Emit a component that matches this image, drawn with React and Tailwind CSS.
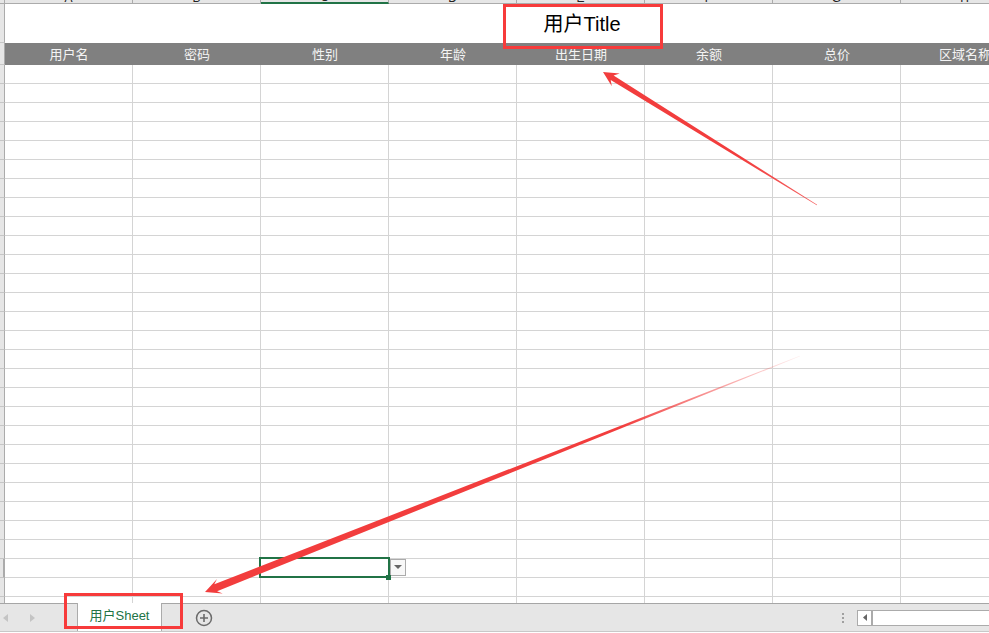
const COLS = ["用户名", "密码", "性别", "年龄", "出生日期", "余额", "总价", "区域名称"];
const LETTERS = ["A", "B", "C", "D", "E", "F", "G", "H"];
const DATA_ROWS = 29;
const SEL_ROW = 26;
const SEL_COL = 2;

function arrowPoints(tail, tip, head, wing, w0, w1) {
  const dx = tip[0] - tail[0];
  const dy = tip[1] - tail[1];
  const len = Math.hypot(dx, dy);
  const ux = dx / len;
  const uy = dy / len;
  const nx = -uy;
  const ny = ux;
  const base = [tip[0] - ux * head, tip[1] - uy * head];
  const inner = [tip[0] - ux * head * 0.72, tip[1] - uy * head * 0.72];
  const pts = [
    [tail[0] + nx * w0, tail[1] + ny * w0],
    [inner[0] + nx * w1, inner[1] + ny * w1],
    [base[0] + nx * wing, base[1] + ny * wing],
    tip,
    [base[0] - nx * wing, base[1] - ny * wing],
    [inner[0] - nx * w1, inner[1] - ny * w1],
    [tail[0] - nx * w0, tail[1] - ny * w0],
  ];
  return pts.map((p) => p[0].toFixed(1) + "," + p[1].toFixed(1)).join(" ");
}

function RowHead({ className = "" }) {
  return <div className={"w-[5px] shrink-0 bg-[#e6e6e6] border-r border-r-[#ababab] " + className} />;
}

function Annotations() {
  return (
    <svg className="absolute inset-0 pointer-events-none" width="989" height="633" viewBox="0 0 989 633">
      <defs>
        <linearGradient id="g1" gradientUnits="userSpaceOnUse" x1="817" y1="205" x2="740" y2="157">
          <stop offset="0" stopColor="#f23d3d" stopOpacity="0.8" />
          <stop offset="1" stopColor="#f23d3d" stopOpacity="1" />
        </linearGradient>
        <linearGradient id="g2" gradientUnits="userSpaceOnUse" x1="800" y1="356" x2="620" y2="428">
          <stop offset="0" stopColor="#f23d3d" stopOpacity="0.08" />
          <stop offset="1" stopColor="#f23d3d" stopOpacity="1" />
        </linearGradient>
      </defs>
      <rect x="504.5" y="5.5" width="157" height="42" fill="none" stroke="#f73b3b" strokeWidth="3" />
      <rect x="65.5" y="594.5" width="116" height="33" fill="none" stroke="#f73b3b" strokeWidth="3" />
      <polygon points={arrowPoints([817, 205], [603, 72], 15, 7.5, 0.4, 2.7)} fill="url(#g1)" />
      <polygon points={arrowPoints([800, 356], [205, 592], 16, 7.8, 0.3, 3.7)} fill="url(#g2)" />
    </svg>
  );
}

export default function App() {
  return (
    <div className="relative w-[989px] h-[633px] overflow-hidden bg-white flex flex-col font-['Liberation_Sans','Noto_Sans_CJK_SC',sans-serif]">
      <div className="h-[603px] shrink-0 overflow-hidden">
        {/* column letters, mostly scrolled away */}
        <div className="flex h-[4px]">
          <div className="w-[5px] shrink-0 bg-[#e6e6e6] border-r border-b border-[#ababab]" />
          {LETTERS.map((l, i) => (
            <div
              key={l}
              className={
                "w-[128px] shrink-0 bg-[#e6e6e6] border-r border-r-[#ababab] flex justify-center items-end overflow-hidden " +
                (i === SEL_COL ? "border-b-2 border-b-[#217346] bg-[#d2d2d2]" : "border-b border-b-[#ababab]")
              }
            >
              <span className="text-[12px] leading-none translate-y-[1px] text-[#222]">{l}</span>
            </div>
          ))}
        </div>

        {/* title row */}
        <div className="flex h-[39px]">
          <RowHead className="border-b border-b-[#c6c6c6]" />
          {COLS.map((c, i) => (
            <div key={c} className="w-[128px] shrink-0 flex items-center justify-center">
              {i === 4 && <span className="whitespace-nowrap text-[20px] text-black pl-[2px] pt-[1px]">用户Title</span>}
            </div>
          ))}
        </div>

        {/* header row */}
        <div className="flex h-[22px]">
          <RowHead className="border-b border-b-[#c6c6c6]" />
          {COLS.map((c) => (
            <div
              key={c}
              className="w-[128px] shrink-0 bg-[#808080] flex items-center justify-center text-[13px] text-[#f4f4f4] whitespace-nowrap font-['Noto_Sans_CJK_SC',sans-serif]"
            >
              {c}
            </div>
          ))}
        </div>

        {Array.from({ length: DATA_ROWS }).map((_, r) => (
          <div key={r} className="flex h-[19px]">
            <RowHead
              className={
                "border-b border-b-[#c6c6c6] " + (r === SEL_ROW ? "border-r-2 border-r-[#217346] bg-[#d2d2d2]" : "")
              }
            />
            {COLS.map((c, i) => (
              <div key={c} className="relative w-[128px] shrink-0 border-r border-b border-[#d4d4d4]">
                {r === SEL_ROW && i === SEL_COL && (
                  <>
                    <div className="absolute -left-[2px] -top-[2px] w-[131px] h-[21px] border-2 border-[#217346]" />
                    <div className="absolute left-[129px] top-0 w-[16px] h-[17px] bg-[#f8f8f8] border border-[#ababab] flex items-center justify-center">
                      <svg width="8" height="5" viewBox="0 0 8 5">
                        <polygon points="0,0 8,0 4,4" fill="#666" />
                      </svg>
                    </div>
                    <div className="absolute z-10 left-[125px] top-[16px] w-[5px] h-[5px] bg-[#217346]" />
                  </>
                )}
              </div>
            ))}
          </div>
        ))}
      </div>

      {/* sheet tab bar */}
      <div className="h-[29px] shrink-0 flex items-stretch bg-[#e6e6e6] border-t border-t-[#a6a6a6] border-b border-b-[#c8c8c8]">
        <div className="w-[77px] shrink-0 flex items-center pl-[3px] gap-[22px]">
          <svg width="5" height="8" viewBox="0 0 5 8">
            <polygon points="5,0 5,8 0,4" fill="#c4c4c4" />
          </svg>
          <svg width="5" height="8" viewBox="0 0 5 8">
            <polygon points="0,0 0,8 5,4" fill="#c4c4c4" />
          </svg>
        </div>
        <div className="w-[85px] shrink-0 -mt-px bg-white border-x border-[#ababab] flex items-center justify-center text-[13px] text-[#217346] pb-[2px]">
          用户Sheet
        </div>
        <div className="ml-[33px] flex items-center">
          <svg width="18" height="18" viewBox="0 0 18 18">
            <circle cx="9" cy="9" r="7.5" fill="none" stroke="#6b6b6b" strokeWidth="1.5" />
            <path d="M9 5v8M5 9h8" stroke="#6b6b6b" strokeWidth="1.6" />
          </svg>
        </div>
        <div className="flex-1" />
        <div className="w-[3px] flex flex-col items-center justify-center gap-[2px] mr-[13px]">
          <div className="w-[2px] h-[2px] bg-[#a0a0a0]" />
          <div className="w-[2px] h-[2px] bg-[#a0a0a0]" />
          <div className="w-[2px] h-[2px] bg-[#a0a0a0]" />
        </div>
        <div className="w-[132px] shrink-0 flex items-center">
          <div className="w-[16px] h-[16px] bg-white border border-[#ababab] border-r-2 flex items-center justify-center">
            <svg width="4" height="7" viewBox="0 0 4 7">
              <polygon points="4,0 4,7 0,3.5" fill="#666" />
            </svg>
          </div>
          <div className="flex-1 h-[16px] bg-white border-y border-[#ababab]" />
        </div>
      </div>

      <Annotations />
    </div>
  );
}
